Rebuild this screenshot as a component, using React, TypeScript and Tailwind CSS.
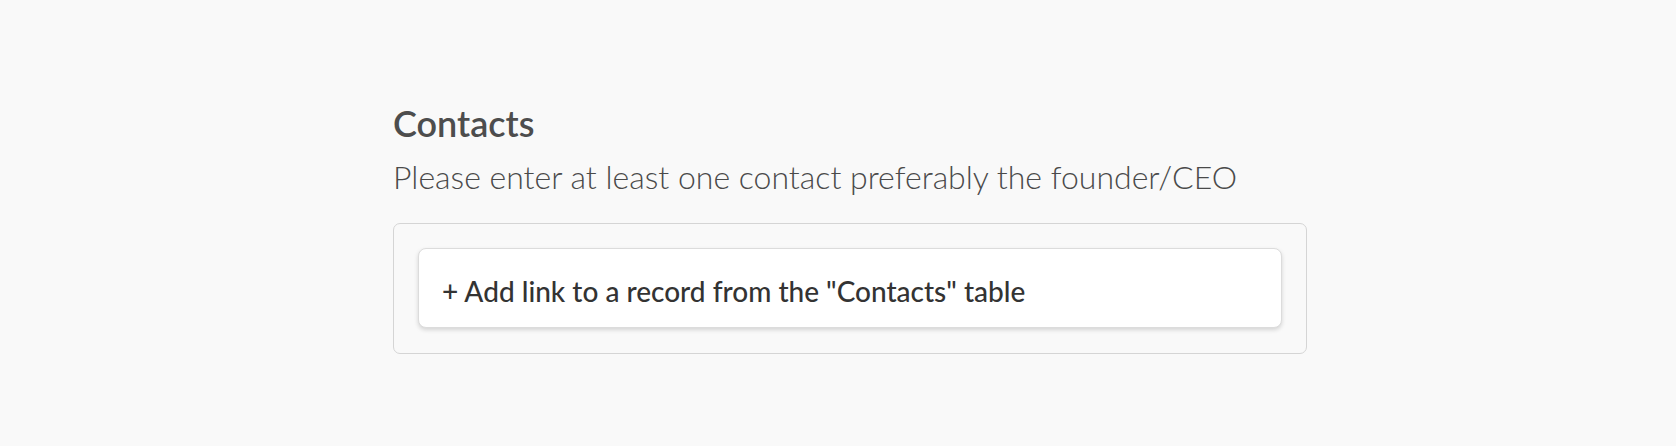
export default function App() {
  return (
    <div className="min-h-[446px] w-full bg-[#f9f9f9] pl-[393px] pt-[102px] font-['Lato',sans-serif]">
      <div className="w-[914px]">
        <h2 className="text-[36px] leading-[43px] font-semibold text-[#4d4d4d]">Contacts</h2>
        <p className="mt-[13px] text-[32px] leading-[38px] font-light text-[#4a4a4a]">
          Please enter at least one contact preferably the founder/CEO
        </p>
        <div className="mt-[27px] rounded-[7px] border border-[#d5d5d5] px-6 pt-6 pb-[25px]">
          <button className="flex h-[80px] w-full items-center rounded-[8px] border border-[#dcdcdc] bg-white pl-[23px] pt-[5px] text-left text-[28px] font-medium text-[#333333] shadow-[0_2px_4px_rgba(0,0,0,0.15)]">
            + Add link to a record from the "Contacts" table
          </button>
        </div>
      </div>
    </div>
  );
}
